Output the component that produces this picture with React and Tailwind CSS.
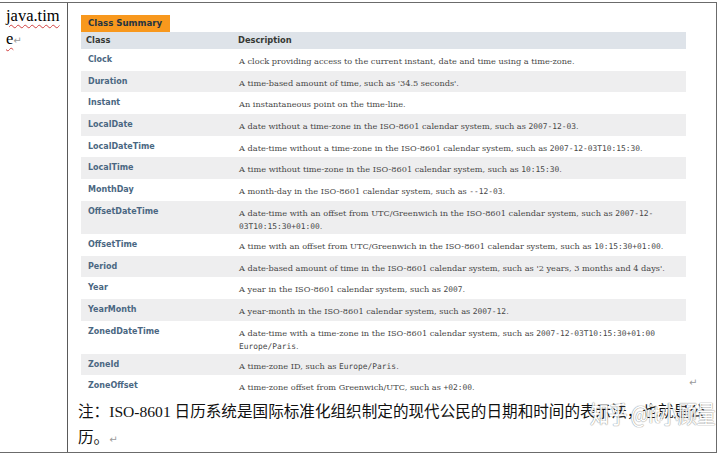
import React from "react";

const rows = [
  { name: "Clock", desc: ["A clock providing access to the current instant, date and time using a time-zone."] },
  { name: "Duration", desc: ["A time-based amount of time, such as '34.5 seconds'."] },
  { name: "Instant", desc: ["An instantaneous point on the time-line."] },
  { name: "LocalDate", desc: ["A date without a time-zone in the ISO-8601 calendar system, such as ", { code: "2007-12-03" }, "."] },
  { name: "LocalDateTime", desc: ["A date-time without a time-zone in the ISO-8601 calendar system, such as ", { code: "2007-12-03T10:15:30" }, "."] },
  { name: "LocalTime", desc: ["A time without time-zone in the ISO-8601 calendar system, such as ", { code: "10:15:30" }, "."] },
  { name: "MonthDay", desc: ["A month-day in the ISO-8601 calendar system, such as ", { code: "--12-03" }, "."] },
  {
    name: "OffsetDateTime",
    tall: true,
    desc: ["A date-time with an offset from UTC/Greenwich in the ISO-8601 calendar system, such as ", { code: "2007-12-" }, { br: true }, { code: "03T10:15:30+01:00" }, "."],
  },
  { name: "OffsetTime", desc: ["A time with an offset from UTC/Greenwich in the ISO-8601 calendar system, such as ", { code: "10:15:30+01:00" }, "."] },
  { name: "Period", desc: ["A date-based amount of time in the ISO-8601 calendar system, such as '2 years, 3 months and 4 days'."] },
  { name: "Year", desc: ["A year in the ISO-8601 calendar system, such as ", { code: "2007" }, "."] },
  { name: "YearMonth", desc: ["A year-month in the ISO-8601 calendar system, such as ", { code: "2007-12" }, "."] },
  {
    name: "ZonedDateTime",
    tall: true,
    desc: ["A date-time with a time-zone in the ISO-8601 calendar system, such as ", { code: "2007-12-03T10:15:30+01:00" }, { br: true }, { code: "Europe/Paris" }, "."],
  },
  { name: "ZoneId", desc: ["A time-zone ID, such as ", { code: "Europe/Paris" }, "."] },
  { name: "ZoneOffset", last: true, desc: ["A time-zone offset from Greenwich/UTC, such as ", { code: "+02:00" }, "."] },
];

const Desc = ({ parts }) =>
  parts.map((p, i) => {
    if (typeof p === "string") return <span key={i}>{p}</span>;
    if (p.br) return <br key={i} />;
    return (
      <span key={i} className="font-['DejaVu_Sans_Mono',monospace] text-[7.9px]">
        {p.code}
      </span>
    );
  });

const ClassSummary = () => (
  <div className="w-[605px] shrink-0 flex flex-col">
    <div className="flex">
      <div className="h-[17px] w-[89px] bg-[#f8981d] flex items-center pl-[7px] text-[8.6px] font-bold text-[#253441] font-['DejaVu_Sans',sans-serif]">
        Class Summary
      </div>
    </div>
    <div className="h-[17px] bg-[#dee3e9] flex items-center text-[8.3px] font-bold text-[#353833] font-['DejaVu_Sans',sans-serif]">
      <div className="w-[157px] pl-[5px]">Class</div>
      <div>Description</div>
    </div>
    {rows.map((r, i) => (
      <div
        key={r.name}
        className={`flex ${r.tall ? "h-[33px]" : r.last ? "h-[18px]" : "h-[21.7px]"} ${
          i % 2 === 1 ? "bg-[#eeeeef]" : "bg-white"
        }`}
      >
        <div className="w-[158px] shrink-0 pl-[7px] pt-[5px] leading-[12px] text-[8px] font-bold text-[#4a6782] font-['DejaVu_Sans',sans-serif]">
          {r.name}
        </div>
        <div className="flex-1 min-w-0 pt-[6px] leading-[12.5px] text-[8.2px] text-[#474747] font-['DejaVu_Serif',serif] whitespace-nowrap">
          <Desc parts={r.desc} />
        </div>
      </div>
    ))}
  </div>
);

const Mark = () => <span className="text-[#9a9a9a] text-[10px] font-['DejaVu_Sans',sans-serif]">↵</span>;

export default function App() {
  return (
    <div className="w-[720px] h-[454px] bg-white relative overflow-hidden">
      <div className="mt-[2px] w-[717px] h-[451px] border-t border-b border-r border-[#6b6b6b] flex">
        <div className="w-[68px] shrink-0 border-r border-[#5a5a5a] pl-[6px] pt-[1px] text-[16.5px] leading-[23px] text-black font-['Liberation_Serif','Noto_Sans_CJK_SC',serif]">
          <span className="underline decoration-wavy decoration-[#d04040] decoration-[1px] underline-offset-[3px]">java.tim</span>
          <br />
          <span className="underline decoration-wavy decoration-[#d04040] decoration-[1px] underline-offset-[3px]">e</span>
          <Mark />
        </div>
        <div className="flex-1 min-w-0 flex flex-col pl-[10px]">
          <div className="flex items-end pl-[3px] pt-[12px]">
            <ClassSummary />
            <div className="ml-[3px] mb-[1px]">
              <Mark />
            </div>
          </div>
          <div className="mt-[6px] text-[15.6px] leading-[26px] text-[#111] whitespace-nowrap font-['Liberation_Serif','Noto_Sans_CJK_SC',serif]">
            注：ISO-8601 日历系统是国际标准化组织制定的现代公民的日期和时间的表示法，也就是公
            <br />
            历。
            <Mark />
          </div>
        </div>
      </div>
      <div className="absolute left-[590px] top-[401px] whitespace-nowrap text-[19px] leading-[24px] tracking-[-0.5px] scale-y-125 text-white font-['Noto_Sans_CJK_SC',sans-serif] [text-shadow:0_0_1px_#888,0_0_1px_#888] opacity-90">
        知乎 @it小顾量
      </div>
    </div>
  );
}
